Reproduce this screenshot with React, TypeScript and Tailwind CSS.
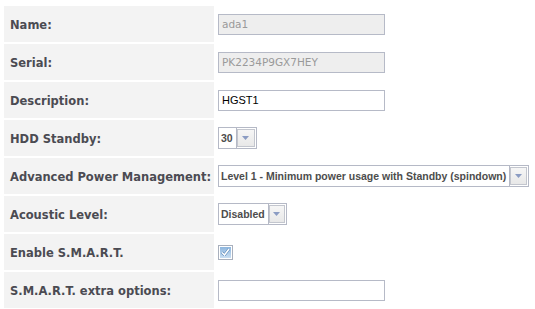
import { ReactNode } from "react";

const labelFont = { fontFamily: '"DejaVu Sans", Verdana, sans-serif' };
const selFont = { fontFamily: '"Liberation Sans", Arial, sans-serif' };

const Row = ({ label, children }: { label: string; children: ReactNode }) => (
  <div className="flex h-[36px] gap-[2px]">
    <div
      className="w-[210px] bg-[#f3f3f3] flex items-center pl-[6px] pt-[3px] text-[11.5px] font-bold text-[#4b4b52]"
      style={labelFont}
    >
      {label}
    </div>
    <div className="flex-1 flex items-center pl-[2px]">{children}</div>
  </div>
);

const Arrow = () => (
  <div className="w-[19px] h-[18px] ml-auto mr-[1px] border border-[#c3c6ce] bg-gradient-to-b from-[#f6f6f6] to-[#e8e8e8] flex items-center justify-center">
    <svg width="7" height="4" viewBox="0 0 7 4">
      <path d="M0 0h7L3.5 4z" fill="#8b9cc3" />
    </svg>
  </div>
);

const Select = ({ value, width }: { value: string; width: string }) => (
  <div className={`h-[22px] border border-[#b5b9c6] flex items-center bg-white ${width}`}>
    <span
      className="pl-[2px] pr-[3px] pt-[1px] text-[10.5px] font-bold text-[#4d4d4d] whitespace-nowrap border-r border-[#b5b9c6] h-full flex items-center"
      style={selFont}
    >
      {value}
    </span>
    <Arrow />
  </div>
);

const TextInput = ({ value, disabled }: { value: string; disabled?: boolean }) => (
  <div
    className={`w-[167px] h-[21px] border border-[#b6bac7] flex items-center pl-[3px] pt-[1px] ${
      disabled ? "bg-[#eeeeee] text-[#9a9a9a] text-[10.5px]" : "bg-white text-black text-[11px]"
    }`}
    style={disabled ? labelFont : selFont}
  >
    {value}
  </div>
);

export default function App() {
  return (
    <div className="w-[535px] h-[309px] bg-white pt-[6px] pl-[4px] flex flex-col gap-[2px] overflow-hidden">
      <Row label="Name:">
        <TextInput value="ada1" disabled />
      </Row>
      <Row label="Serial:">
        <TextInput value="PK2234P9GX7HEY" disabled />
      </Row>
      <Row label="Description:">
        <TextInput value="HGST1" />
      </Row>
      <Row label="HDD Standby:">
        <Select value="30" width="w-[39px]" />
      </Row>
      <Row label="Advanced Power Management:">
        <Select value="Level 1 - Minimum power usage with Standby (spindown)" width="w-[311px]" />
      </Row>
      <Row label="Acoustic Level:">
        <Select value="Disabled" width="w-[69px]" />
      </Row>
      <Row label="Enable S.M.A.R.T.">
        <div className="w-[15px] h-[15px] border border-[#a9b0bd] p-[1px] bg-white">
          <div className="w-full h-full bg-gradient-to-b from-[#8db6de] to-[#c9def2] flex items-center justify-center">
            <svg width="9" height="8" viewBox="0 0 9 8">
              <path d="M1 4.5L3.5 7L8 1" stroke="#4f7fb3" strokeWidth="2.6" fill="none" />
              <path d="M1 4.5L3.5 7L8 1" stroke="white" strokeWidth="1.6" fill="none" />
            </svg>
          </div>
        </div>
      </Row>
      <Row label="S.M.A.R.T. extra options:">
        <TextInput value="" />
      </Row>
    </div>
  );
}
